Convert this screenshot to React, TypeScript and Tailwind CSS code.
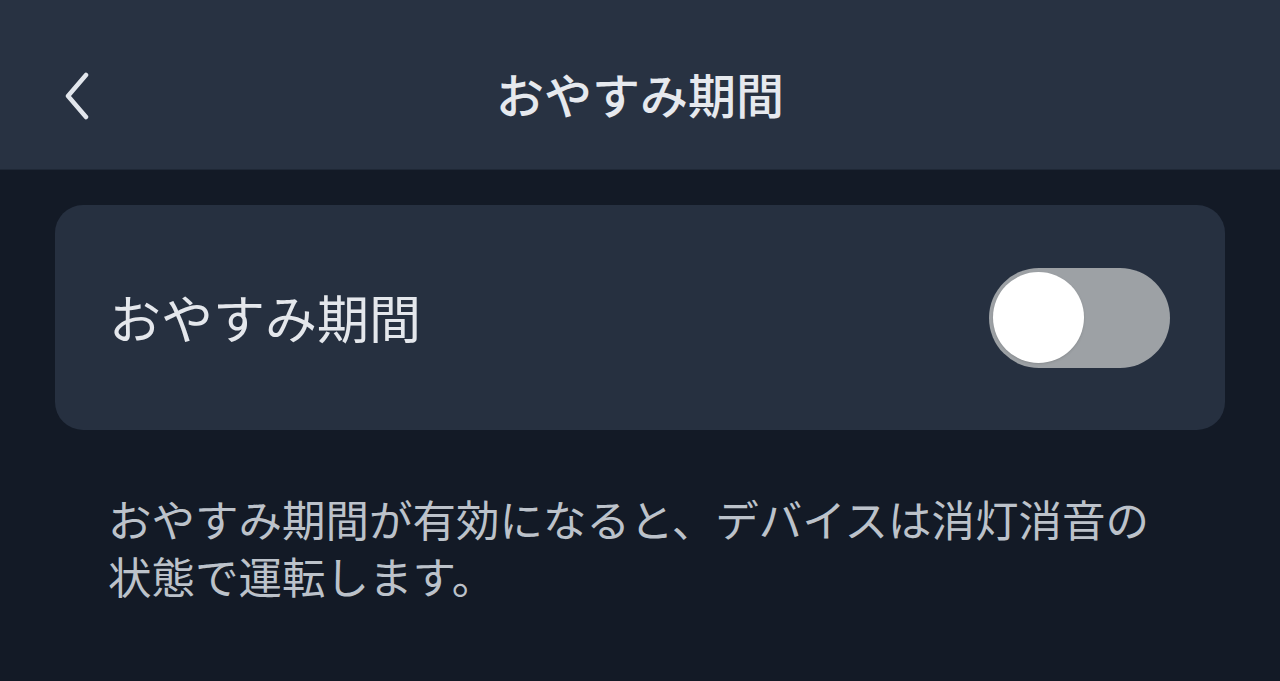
export default function App() {
  return (
    <div
      className="w-[1280px] h-[681px] bg-[#131a26] overflow-hidden"
      style={{ fontFamily: '"Noto Sans CJK JP", "Noto Sans", sans-serif' }}
    >
      {/* ヘッダー */}
      <header className="h-[170px] bg-[#283242] border-b border-[#1f2836] flex items-center relative">
        <button className="absolute left-[54px] top-[72px] w-[44px] h-[50px] flex items-center justify-center">
          <svg width="32" height="50" viewBox="0 0 32 50" fill="none">
            <path
              d="M26 3 L8 24 L26 45"
              stroke="#e2e6ec"
              strokeWidth="4.5"
              strokeLinecap="round"
              strokeLinejoin="round"
            />
          </svg>
        </button>
        <h1 className="flex-1 text-center text-[48px] font-medium text-[#e6e9ee] pt-[16px]">
          おやすみ期間
        </h1>
      </header>

      <main className="px-[55px] pt-[35px]">
        {/* 設定カード */}
        <div className="h-[225px] bg-[#263040] rounded-[28px] flex items-center justify-between pl-[54px] pr-[55px]">
          <span className="text-[52px] text-[#e4e7ec] pb-[2px]">おやすみ期間</span>
          <div className="w-[181px] h-[100px] rounded-full bg-[#9da1a5] flex items-center pl-[4px]">
            <div className="w-[91px] h-[91px] rounded-full bg-white shadow-sm" />
          </div>
        </div>

        <p className="mt-[60px] pl-[53px] text-[43.5px] leading-[57px] text-[#bcc2ca] w-[1150px]">
          おやすみ期間が有効になると、デバイスは消灯消音の
          <br />
          状態で運転します。
        </p>
      </main>
    </div>
  );
}
